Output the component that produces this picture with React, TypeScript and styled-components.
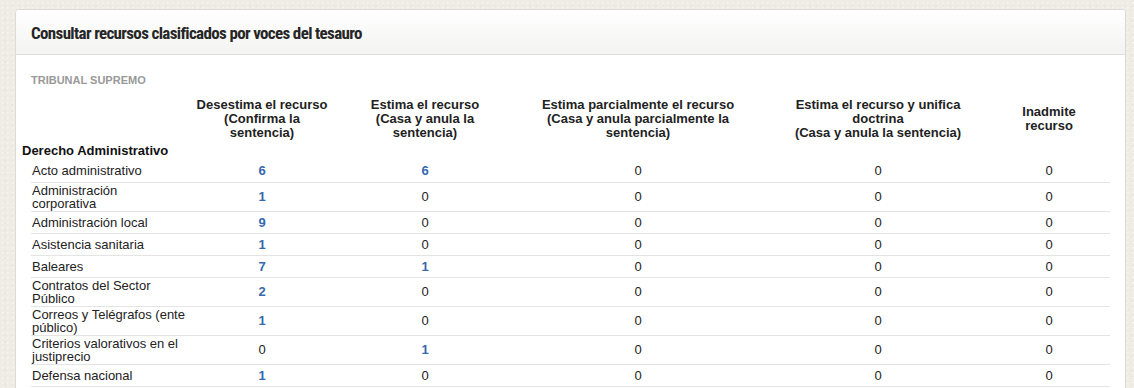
import React from "react";
import styled, { createGlobalStyle } from "styled-components";

const GlobalStyle = createGlobalStyle`
    html, body {
        margin: 0;
        padding: 0;
        background-color: #efece5;
        background-image:
            radial-gradient(rgba(255, 255, 255, 0.35) 1px, transparent 1px),
            radial-gradient(rgba(160, 150, 130, 0.08) 1px, transparent 1px);
        background-size: 5px 5px, 7px 7px;
        background-position: 0 0, 2px 3px;
    }
    body {
        font-family: "Liberation Sans", Arial, sans-serif;
        color: #222;
    }
`;

type Row = {
    label: string;
    counts: number[];
};

type Column = {
    title: string;
    sub: string;
    textWidth: number;
};

const columns: Column[] = [
    { title: "Desestima el recurso", sub: "(Confirma la sentencia)", textWidth: 134 },
    { title: "Estima el recurso", sub: "(Casa y anula la sentencia)", textWidth: 130 },
    { title: "Estima parcialmente el recurso", sub: "(Casa y anula parcialmente la sentencia)", textWidth: 215 },
    { title: "Estima el recurso y unifica doctrina", sub: "(Casa y anula la sentencia)", textWidth: 186 },
    { title: "Inadmite recurso", sub: "", textWidth: 80 }
];

const rows: Row[] = [
    { label: "Acto administrativo", counts: [6, 6, 0, 0, 0] },
    { label: "Administración\ncorporativa", counts: [1, 0, 0, 0, 0] },
    { label: "Administración local", counts: [9, 0, 0, 0, 0] },
    { label: "Asistencia sanitaria", counts: [1, 0, 0, 0, 0] },
    { label: "Baleares", counts: [7, 1, 0, 0, 0] },
    { label: "Contratos del Sector Público", counts: [2, 0, 0, 0, 0] },
    { label: "Correos y Telégrafos (ente público)", counts: [1, 0, 0, 0, 0] },
    { label: "Criterios valorativos en el justiprecio", counts: [0, 1, 0, 0, 0] },
    { label: "Defensa nacional", counts: [1, 0, 0, 0, 0] }
];

// label column + 5 result columns
const colWidths = [159, 144, 182, 244, 236, 114];

export default function App() {
    return (
        <>
            <GlobalStyle />
            <Page>
                <Panel>
                    <PanelHeader>
                        <PanelTitle>Consultar recursos clasificados por voces del tesauro</PanelTitle>
                    </PanelHeader>
                    <PanelBody>
                        <CourtName>TRIBUNAL SUPREMO</CourtName>
                        <Table>
                            <colgroup>
                                {colWidths.map((w, i) => (
                                    <col key={i} style={{ width: w }} />
                                ))}
                            </colgroup>
                            <thead>
                                <tr>
                                    <HeadCell />
                                    {columns.map((c, i) => (
                                        <HeadCell key={i} $last={i === columns.length - 1}>
                                            <HeadText style={{ width: c.textWidth }}>
                                                {c.title}
                                                {c.sub && (
                                                    <>
                                                        <br />
                                                        {c.sub}
                                                    </>
                                                )}
                                            </HeadText>
                                        </HeadCell>
                                    ))}
                                </tr>
                            </thead>
                            <tbody>
                                <tr>
                                    <GroupCell colSpan={6}>Derecho Administrativo</GroupCell>
                                </tr>
                                {rows.map((r) => (
                                    <DataRow key={r.label}>
                                        <LabelCell>{r.label}</LabelCell>
                                        {r.counts.map((n, i) => (
                                            <CountCell key={i} $last={i === r.counts.length - 1}>
                                                {n > 0 ? <CountLink href="#">{n}</CountLink> : n}
                                            </CountCell>
                                        ))}
                                    </DataRow>
                                ))}
                            </tbody>
                        </Table>
                    </PanelBody>
                </Panel>
            </Page>
        </>
    );
}

const Page = styled.div`
    padding: 9px 8px 20px 15px;
`;
const Panel = styled.section`
    background: #fff;
    border: 1px solid #dcdad5;
    border-radius: 4px;
    overflow: hidden;
`;
const PanelHeader = styled.header`
    height: 45px;
    display: flex;
    align-items: center;
    padding: 2px 15px 0;
    box-sizing: border-box;
    background: linear-gradient(#ffffff, #f3f3f2);
    border-bottom: 1px solid #dedede;
`;
const PanelTitle = styled.h2`
    margin: 0;
    font-family: Roboto, "Liberation Sans", sans-serif;
    font-stretch: 75%;
    font-variation-settings: "wdth" 75;
    font-size: 17px;
    letter-spacing: -0.65px;
    font-weight: bold;
    color: #262626;
`;
const PanelBody = styled.div`
    padding: 19px 16px 24px 15px;
`;
const CourtName = styled.div`
    font-size: 11px;
    font-weight: bold;
    color: #999;
    line-height: 13px;
    margin-bottom: 10px;
`;
const Table = styled.table`
    width: 1079px;
    table-layout: fixed;
    border-collapse: collapse;
    font-size: 13px;
`;
const HeadCell = styled.th<{ $last?: boolean }>`
    padding: ${(p) => (p.$last ? "0 8px 0 0" : "0")};
    height: 44px;
    text-align: center;
    vertical-align: middle;
`;
const HeadText = styled.span`
    display: inline-block;
    font-size: 13px;
    font-weight: bold;
    line-height: 14px;
    color: #222;
`;
const GroupCell = styled.td`
    padding: 0;
    height: 19px;
    /* the group title sits out to the left of the row rules */
    text-indent: -9px;
    font-weight: bold;
    line-height: 15px;
    color: #111;
`;
const DataRow = styled.tr`
    height: 22px;
`;
const LabelCell = styled.td`
    padding: 1px 2px 1px 1px;
    line-height: 13px;
    white-space: pre-line;
    color: #222;
    border-bottom: 1px solid #e4e4e4;
`;
const CountCell = styled.td<{ $last?: boolean }>`
    padding: ${(p) => (p.$last ? "0 8px 0 0" : "0")};
    text-align: center;
    line-height: 13px;
    color: #222;
    border-bottom: 1px solid #e4e4e4;
`;
const CountLink = styled.a`
    color: #3568ad;
    font-weight: bold;
    text-decoration: none;
`;
